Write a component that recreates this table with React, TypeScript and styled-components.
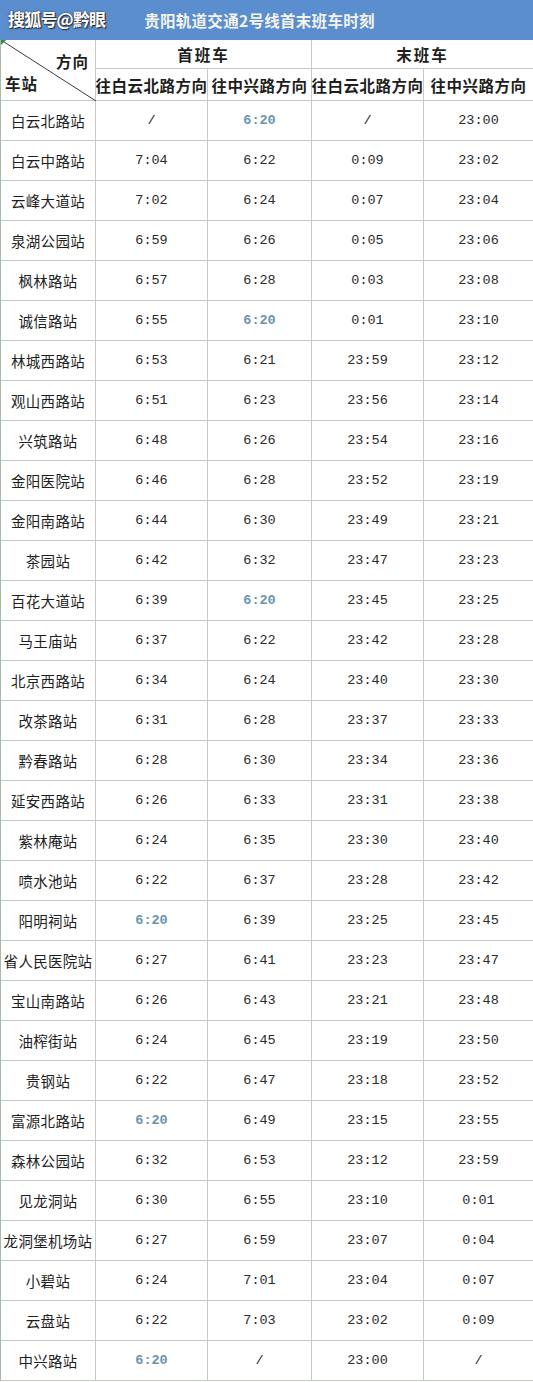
import React from "react";
import styled, { createGlobalStyle } from "styled-components";

const GlobalStyle = createGlobalStyle`
  html, body { margin: 0; padding: 0; background: #ffffff; }
  * { box-sizing: border-box; }
`;

const LINE = "#c5ccc5";
const CJK = `"Noto Sans CJK SC", "Noto Sans", sans-serif`;

const Page = styled.div`
  width: 533px;
  background: #fff;
  font-family: ${CJK};
  color: #1e1e1e;
`;

const TitleBar = styled.div`
  position: relative;
  height: 40px;
  background: #5b8ecf;
  display: flex;
  align-items: center;
  justify-content: center;
  padding-right: 14px;
`;

const Watermark = styled.span`
  position: absolute;
  left: 8px;
  top: 6px;
  font-size: 17px;
  font-weight: 700;
  color: #ffffff;
  letter-spacing: -0.8px;
  text-shadow: 1px 1px 1px #2a2a2a, 0 0 2px #333;
`;

const Title = styled.h1`
  margin: 0;
  font-size: 15.5px;
  font-weight: 700;
  color: #f3f3ea;
  letter-spacing: 0.3px;
`;

const Grid = styled.div`
  display: grid;
  grid-template-columns: 95px 112px 104px 112px 110px;
  grid-template-rows: 29px 32px;
  grid-auto-rows: 40px;
  border-left: 1px solid #a9b9a9;
`;

const Cell = styled.div<{ $head?: boolean; $span?: number }>`
  display: flex;
  align-items: center;
  justify-content: center;
  border-right: 1px solid ${LINE};
  border-bottom: 1px solid ${LINE};
  grid-column: ${(p) => (p.$span ? `span ${p.$span}` : "auto")};
  font-size: ${(p) => (p.$head ? "15.5px" : "14.5px")};
  font-weight: ${(p) => (p.$head ? 700 : 400)};
  white-space: nowrap;
`;

const HeadTop = styled(Cell)`
  letter-spacing: 2px;
`;

const HeadSub = styled(Cell)`
  letter-spacing: 0.5px;
`;

const Corner = styled.div`
  position: relative;
  grid-row: span 2;
  border-right: 1px solid ${LINE};
  border-bottom: 1px solid ${LINE};
  font-size: 15.5px;
  font-weight: 700;
`;

const Diagonal = styled.svg`
  position: absolute;
  inset: 0;
`;

const CornerTop = styled.span`
  position: absolute;
  right: 6px;
  top: 10px;
  letter-spacing: 1px;
`;

const CornerBottom = styled.span`
  position: absolute;
  left: 4px;
  bottom: 6px;
  letter-spacing: 1px;
`;

const HeaderRows = styled.div`
  display: contents;
`;

const Time = styled(Cell)<{ $hl?: boolean }>`
  font-family: "Liberation Mono", "DejaVu Sans Mono", monospace;
  font-size: 13.5px;
  font-weight: ${(p) => (p.$hl ? 700 : 400)};
  color: ${(p) => (p.$hl ? "#6b93ad" : "#2a2a2a")};
`;

const Station = styled(Cell)`
  letter-spacing: 0.3px;
`;

const data: [string, string, string, string, string][] = [
  ["白云北路站", "/", "*6:20", "/", "23:00"],
  ["白云中路站", "7:04", "6:22", "0:09", "23:02"],
  ["云峰大道站", "7:02", "6:24", "0:07", "23:04"],
  ["泉湖公园站", "6:59", "6:26", "0:05", "23:06"],
  ["枫林路站", "6:57", "6:28", "0:03", "23:08"],
  ["诚信路站", "6:55", "*6:20", "0:01", "23:10"],
  ["林城西路站", "6:53", "6:21", "23:59", "23:12"],
  ["观山西路站", "6:51", "6:23", "23:56", "23:14"],
  ["兴筑路站", "6:48", "6:26", "23:54", "23:16"],
  ["金阳医院站", "6:46", "6:28", "23:52", "23:19"],
  ["金阳南路站", "6:44", "6:30", "23:49", "23:21"],
  ["茶园站", "6:42", "6:32", "23:47", "23:23"],
  ["百花大道站", "6:39", "*6:20", "23:45", "23:25"],
  ["马王庙站", "6:37", "6:22", "23:42", "23:28"],
  ["北京西路站", "6:34", "6:24", "23:40", "23:30"],
  ["改茶路站", "6:31", "6:28", "23:37", "23:33"],
  ["黔春路站", "6:28", "6:30", "23:34", "23:36"],
  ["延安西路站", "6:26", "6:33", "23:31", "23:38"],
  ["紫林庵站", "6:24", "6:35", "23:30", "23:40"],
  ["喷水池站", "6:22", "6:37", "23:28", "23:42"],
  ["阳明祠站", "*6:20", "6:39", "23:25", "23:45"],
  ["省人民医院站", "6:27", "6:41", "23:23", "23:47"],
  ["宝山南路站", "6:26", "6:43", "23:21", "23:48"],
  ["油榨街站", "6:24", "6:45", "23:19", "23:50"],
  ["贵钢站", "6:22", "6:47", "23:18", "23:52"],
  ["富源北路站", "*6:20", "6:49", "23:15", "23:55"],
  ["森林公园站", "6:32", "6:53", "23:12", "23:59"],
  ["见龙洞站", "6:30", "6:55", "23:10", "0:01"],
  ["龙洞堡机场站", "6:27", "6:59", "23:07", "0:04"],
  ["小碧站", "6:24", "7:01", "23:04", "0:07"],
  ["云盘站", "6:22", "7:03", "23:02", "0:09"],
  ["中兴路站", "*6:20", "/", "23:00", "/"],
];

export default function App() {
  return (
    <Page>
      <GlobalStyle />
      <TitleBar>
        <Watermark>搜狐号@黔眼</Watermark>
        <Title>贵阳轨道交通2号线首末班车时刻</Title>
      </TitleBar>
      <Grid>
        <HeaderRows>
          <Corner>
            <Diagonal width="95" height="61" viewBox="0 0 95 61">
              <line x1="0" y1="0" x2="95" y2="61" stroke="#3a3a3a" strokeWidth="1" />
              <polygon points="0,0 5,0 0,5" fill="#2f8a3a" />
            </Diagonal>
            <CornerTop>方向</CornerTop>
            <CornerBottom>车站</CornerBottom>
          </Corner>
          <HeadTop $head $span={2}>首班车</HeadTop>
          <HeadTop $head $span={2}>末班车</HeadTop>
          <HeadSub $head>往白云北路方向</HeadSub>
          <HeadSub $head>往中兴路方向</HeadSub>
          <HeadSub $head>往白云北路方向</HeadSub>
          <HeadSub $head>往中兴路方向</HeadSub>
        </HeaderRows>
        {data.map((row) => (
          <React.Fragment key={row[0]}>
            <Station>{row[0]}</Station>
            {row.slice(1).map((t, i) => {
              const hl = t.startsWith("*");
              return (
                <Time key={i} $hl={hl}>
                  {hl ? t.slice(1) : t}
                </Time>
              );
            })}
          </React.Fragment>
        ))}
      </Grid>
    </Page>
  );
}
